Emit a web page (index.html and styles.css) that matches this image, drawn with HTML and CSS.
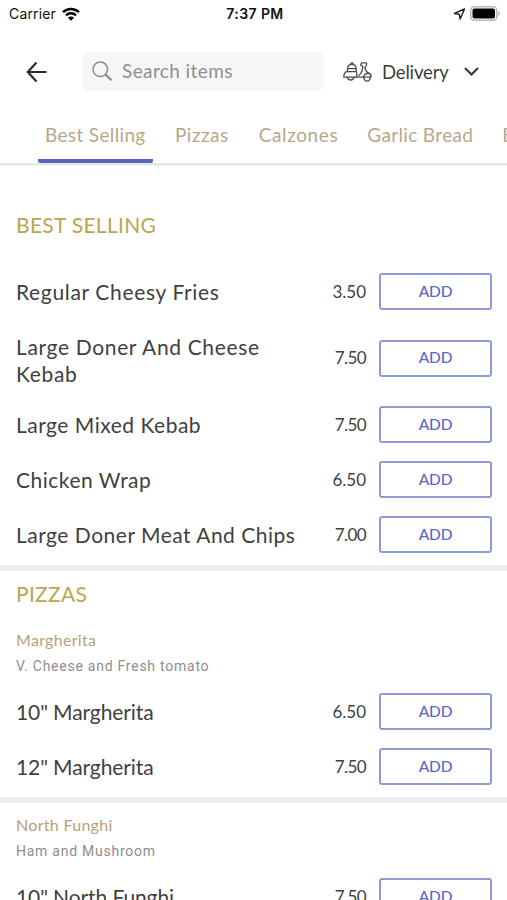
FILE: index.html
```html
<!DOCTYPE html>
<html lang="en">
<head>
    <meta charset="UTF-8">
    <meta name="viewport" content="width=device-width, initial-scale=1.0">
    <title>Menu</title>
    <link rel="stylesheet" href="styles.css">
</head>
<body>

    <div class="status-bar">
        <div class="carrier">
            <span>Carrier</span>
            <svg width="18" height="14" viewBox="0 0 18 14" fill="none" stroke="#000" stroke-width="2.5">
                <path d="M1 5.2C5.5 .8 12.500 .8 17 5.200"/>
                <path d="M4 8.300C6.800 5.500 11.200 5.500 14 8.300"/>
                <path d="M9 13.800L5.900 10.700C7.600 9.100 10.400 9.100 12.100 10.700Z" fill="#000" stroke="none"/>
            </svg>
        </div>
        <span class="time">7:37 PM</span>
        <div class="indicators">
            <svg width="13" height="12" viewBox="0 0 13 12" fill="none" stroke="#222" stroke-width="1.5" stroke-linejoin="round">
                <path d="M11.500 1L1.500 5.400L6.300 6.300L7.200 11Z"/>
            </svg>
            <svg width="31" height="15" viewBox="0 0 31 15">
                <rect x=".75" y=".75" width="26" height="13.500" rx="3.500" fill="#fff" stroke="#b9b9b9" stroke-width="1.500"/>
                <rect x="2.500" y="2.500" width="22.500" height="10" rx="2" fill="#000"/>
                <path d="M28.200 5C30.400 6 30.400 9 28.200 10Z" fill="#b9b9b9"/>
            </svg>
        </div>
    </div>

    <header class="header">
        <svg class="back" width="22" height="22" viewBox="0 0 22 22" fill="none" stroke="#2b2b2b" stroke-width="2.200">
            <path d="M20.500 11H2M10.500 1.500L1.800 11L10.500 20.500"/>
        </svg>
        <div class="search">
            <svg width="21" height="21" viewBox="0 0 21 21" fill="none" stroke="#8c8c8c" stroke-width="1.500">
                <circle cx="8.300" cy="8.300" r="7.300"/>
                <path d="M13.600 13.600L19.500 19.300" stroke-width="2.200"/>
            </svg>
            <span>Search items</span>
        </div>
        <div class="mode">
            <svg width="29" height="22" viewBox="0 0 29 22" fill="none" stroke="#4a4a4a" stroke-width="1.300" stroke-linejoin="round" stroke-linecap="round">
                <path d="M4.500 10.500V7.800C4.800 2 12.900 2 13.200 7.800V10.500"/>
                <path d="M7.500 3.500C7.500 1.500 10.300 1.500 10.300 3.500M4.500 7.600H13.200"/>
                <path d="M3.400 10.700H13.400C14.200 12.200 14.200 14.500 13.400 16.200H11M4.300 16.200H.8C.8 13.500 1.800 11.500 3.400 10.700"/>
                <path d="M4.300 16.200A3.400 3.400 0 0 0 11 16.200Z"/>
                <path d="M13.400 16.200H20.500C21 13.800 22.800 12.500 25 12C23.500 10.500 22 8.500 21.800 6.800L23.500 4V1.800H18.600L17.600 4.200L19.700 5C19.700 9 18 13 15.800 14.500"/>
                <path d="M25 12C27.200 12.500 28.200 14 28.200 15.800L20.500 16.200"/>
                <path d="M21 16.500A3.100 3.100 0 1 0 27 16"/>
            </svg>
            <span>Delivery</span>
            <svg class="chevron" width="15" height="9" viewBox="0 0 15 9" fill="none" stroke="#333" stroke-width="2">
                <path d="M1 1L7.500 7.500L14 1"/>
            </svg>
        </div>
    </header>

    <nav class="tabs">
        <a class="tab active">Best Selling</a>
        <a class="tab pizzas">Pizzas</a>
        <a class="tab calzones">Calzones</a>
        <a class="tab">Garlic Bread</a>
        <a class="tab">B</a>
    </nav>

    <section class="category best">
        <h2>BEST SELLING</h2>
        <div class="item">
            <span class="name wide">Regular Cheesy Fries</span>
            <span class="price">3.50</span>
            <button type="button">ADD</button>
        </div>
        <div class="item tall">
            <span class="name wide">Large Doner And Cheese Kebab</span>
            <span class="price seven">7.50</span>
            <button type="button">ADD</button>
        </div>
        <div class="item">
            <span class="name">Large Mixed Kebab</span>
            <span class="price seven">7.50</span>
            <button type="button">ADD</button>
        </div>
        <div class="item">
            <span class="name">Chicken Wrap</span>
            <span class="price">6.50</span>
            <button type="button">ADD</button>
        </div>
        <div class="item">
            <span class="name">Large Doner Meat And Chips</span>
            <span class="price seven">7.00</span>
            <button type="button">ADD</button>
        </div>
    </section>

    <section class="category pizza-list">
        <h2>PIZZAS</h2>
        <h3>Margherita</h3>
        <p class="description">V. Cheese and Fresh tomato</p>
        <div class="item">
            <span class="name size">10" Margherita</span>
            <span class="price">6.50</span>
            <button type="button">ADD</button>
        </div>
        <div class="item">
            <span class="name size">12" Margherita</span>
            <span class="price seven">7.50</span>
            <button type="button">ADD</button>
        </div>
    </section>

    <section class="category last">
        <h3>North Funghi</h3>
        <p class="description">Ham and Mushroom</p>
        <div class="item">
            <span class="name size">10" North Funghi</span>
            <span class="price seven">7.50</span>
            <button type="button">ADD</button>
        </div>
    </section>

</body>
</html>
```
FILE: styles.css
```css
* {
    box-sizing: border-box;
}

body {
    font-family: Lato, "Liberation Sans", sans-serif;
    margin: 0;
    height: 900px;
    overflow: hidden;
    background-color: #fff;
    color: #404040;
}

.status-bar {
    display: grid;
    grid-template-columns: 1fr auto 1fr;
    align-items: center;
    height: 27px;
    padding: 0 6px 0 9px;
    font-family: Inter, sans-serif;
    font-size: 14px;
    color: #111;
}

.carrier,
.indicators {
    display: flex;
    align-items: center;
    gap: 6px;
    letter-spacing: 0.15px;
}

.indicators {
    justify-content: flex-end;
    gap: 4px;
}

.time {
    font-weight: 600;
    letter-spacing: 0.4px;
}

.header {
    display: flex;
    align-items: center;
    height: 88px;
    padding: 1px 28px 0 26px;
}

.search {
    display: flex;
    align-items: center;
    gap: 9px;
    width: 242px;
    height: 39px;
    margin-left: 34px;
    padding-left: 10px;
    border-radius: 7px;
    background-color: #f6f6f6;
    color: #8f8f8f;
    font-size: 19px;
    letter-spacing: 0.4px;
}

.search span {
    padding-bottom: 2px;
}

.mode {
    display: flex;
    align-items: center;
    flex: 1;
    gap: 10px;
    margin-left: 19px;
    font-size: 18.5px;
    letter-spacing: -0.15px;
}

.chevron {
    margin-left: auto;
}

.tabs {
    display: flex;
    height: 50px;
    padding-left: 38px;
    overflow: hidden;
    border-bottom: 2px solid #e6e6e6;
    box-shadow: 0 1px 1px #f3f3f3;
    font-size: 19px;
    letter-spacing: 0.35px;
    color: #b5a988;
    white-space: nowrap;
}

.tab {
    flex-shrink: 0;
    height: 48px;
    margin-right: 15px;
    padding: 0 7px;
    line-height: 40px;
}

.pizzas {
    margin-right: 16px;
    letter-spacing: 0.5px;
}

.calzones {
    letter-spacing: 0.6px;
}

.active {
    width: 115px;
    border-bottom: 4px solid #5563bd;
    border-radius: 2px;
}

.category {
    padding: 0 15px 3px 16px;
    border-bottom: 6px solid #eee;
}

.best {
    padding-top: 45px;
}

h2 {
    margin: 0;
    height: 54px;
    line-height: 30px;
    font-size: 21px;
    font-weight: 400;
    letter-spacing: 0.3px;
    color: #b9a552;
}

.pizza-list h2 {
    height: 45px;
    padding-top: 8px;
}

h3 {
    margin: 0;
    padding-top: 11px;
    line-height: 26px;
    font-size: 16px;
    font-weight: 400;
    letter-spacing: 0.3px;
    color: #b5a27c;
}

.last h3 {
    padding-top: 9px;
}

.description {
    margin: 0;
    height: 31px;
    line-height: 27px;
    font-family: Roboto, sans-serif;
    font-size: 14px;
    letter-spacing: 0.75px;
    color: #8e8e8e;
}

.item {
    display: flex;
    align-items: center;
    height: 55px;
}

.tall {
    height: 78px;
}

.name {
    width: 290px;
    padding-bottom: 1px;
    line-height: 27px;
    font-size: 21px;
    letter-spacing: 0.5px;
}

.wide {
    letter-spacing: 0.65px;
}

.size {
    letter-spacing: -0.1px;
}

.tall .name {
    padding-top: 5px;
    padding-right: 30px;
}

.price {
    flex: 1;
    padding-right: 13px;
    padding-bottom: 1px;
    text-align: right;
    font-size: 17px;
}

.seven {
    letter-spacing: -0.6px;
}

button {
    width: 113px;
    height: 37px;
    padding: 0 0 2px;
    border: 2px solid #8f9bd6;
    border-radius: 3px;
    background-color: #fff;
    color: #5b68c4;
    font-family: inherit;
    font-size: 15.5px;
    font-weight: 500;
    letter-spacing: -0.2px;
}
```
